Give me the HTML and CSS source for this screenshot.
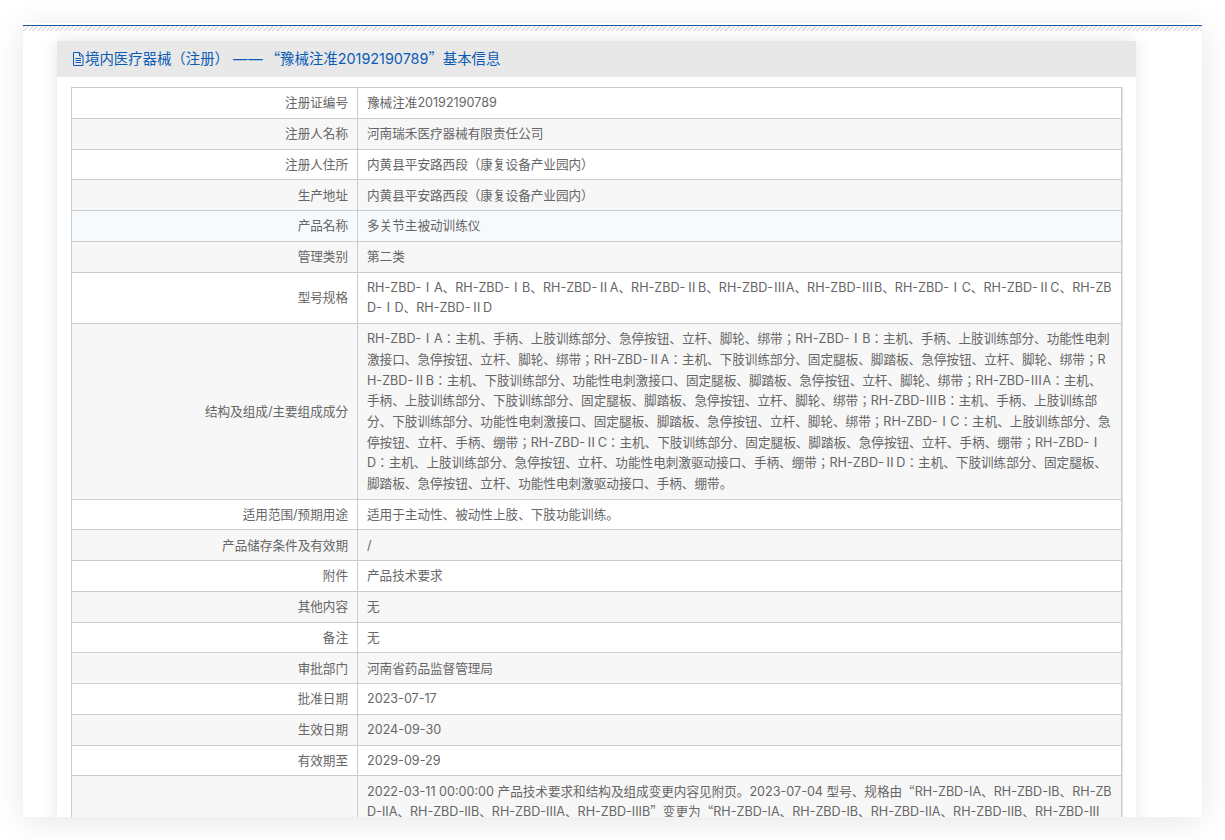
FILE: index.html
```html
<!DOCTYPE html>
<html><head>
  <meta charset="utf-8">
  <title>境内医疗器械（注册）基本信息</title>
<link rel="stylesheet" href="styles.css">
</head>
<body>
<div class="card">
 <div class="hatch"></div>
 <div class="panel">
  <div class="panelhead">
   <svg class="docicon" viewBox="0 0 12 14" width="12" height="14">
    <path d="M1.5 .5h6l3.5 3.5v9.5h-9.5z M7.5 .5v3.5h3.5 M3.5 6.5h5.5 M3.5 8.5h5.5 M3.5 10.5h5.5" fill="none" stroke="currentColor"/>
   </svg>
   <span>境内医疗器械（注册）<span class="dash">——</span><span class="quote">“</span>豫械注准20192190789<span class="quote">”</span>基本信息</span>
  </div>
  <div class="panelbody">
   <table class="info">
    <tr><th>注册证编号</th><td>豫械注准20192190789</td></tr>
    <tr><th>注册人名称</th><td>河南瑞禾医疗器械有限责任公司</td></tr>
    <tr><th>注册人住所</th><td>内黄县平安路西段（康复设备产业园内）</td></tr>
    <tr><th>生产地址</th><td>内黄县平安路西段（康复设备产业园内）</td></tr>
    <tr class="hover"><th>产品名称</th><td>多关节主被动训练仪</td></tr>
    <tr><th>管理类别</th><td>第二类</td></tr>
    <tr><th>型号规格</th><td>RH-ZBD-<span class="q">Ⅰ</span>A、RH-ZBD-<span class="q">Ⅰ</span>B、RH-ZBD-<span class="q">Ⅱ</span>A、RH-ZBD-<span class="q">Ⅱ</span>B、RH-ZBD-<span class="q">Ⅲ</span>A、RH-ZBD-<span class="q">Ⅲ</span>B、RH-ZBD-<span class="q">Ⅰ</span>C、RH-ZBD-<span class="q">Ⅱ</span>C、RH-ZBD-<span class="q">Ⅰ</span>D、RH-ZBD-<span class="q">Ⅱ</span>D</td></tr>
    <tr><th>结构及组成/主要组成成分</th><td>RH-ZBD-<span class="q">Ⅰ</span>A：主机、手柄、上肢训练部分、急停按钮、立杆、脚轮、绑带；RH-ZBD-<span class="q">Ⅰ</span>B：主机、手柄、上肢训练部分、功能性电刺激接口、急停按钮、立杆、脚轮、绑带；RH-ZBD-<span class="q">Ⅱ</span>A：主机、下肢训练部分、固定腿板、脚踏板、急停按钮、立杆、脚轮、绑带；RH-ZBD-<span class="q">Ⅱ</span>B：主机、下肢训练部分、功能性电刺激接口、固定腿板、脚踏板、急停按钮、立杆、脚轮、绑带；RH-ZBD-<span class="q">Ⅲ</span>A：主机、手柄、上肢训练部分、下肢训练部分、固定腿板、脚踏板、急停按钮、立杆、脚轮、绑带；RH-ZBD-<span class="q">Ⅲ</span>B：主机、手柄、上肢训练部分、下肢训练部分、功能性电刺激接口、固定腿板、脚踏板、急停按钮、立杆、脚轮、绑带；RH-ZBD-<span class="q">Ⅰ</span>C：主机、上肢训练部分、急停按钮、立杆、手柄、绷带；RH-ZBD-<span class="q">Ⅱ</span>C：主机、下肢训练部分、固定腿板、脚踏板、急停按钮、立杆、手柄、绷带；RH-ZBD-<span class="q">Ⅰ</span>D：主机、上肢训练部分、急停按钮、立杆、功能性电刺激驱动接口、手柄、绷带；RH-ZBD-<span class="q">Ⅱ</span>D：主机、下肢训练部分、固定腿板、脚踏板、急停按钮、立杆、功能性电刺激驱动接口、手柄、绷带。</td></tr>
    <tr><th>适用范围/预期用途</th><td>适用于主动性、被动性上肢、下肢功能训练。</td></tr>
    <tr><th>产品储存条件及有效期</th><td>/</td></tr>
    <tr><th>附件</th><td>产品技术要求</td></tr>
    <tr><th>其他内容</th><td>无</td></tr>
    <tr><th>备注</th><td>无</td></tr>
    <tr><th>审批部门</th><td>河南省药品监督管理局</td></tr>
    <tr><th>批准日期</th><td>2023-07-17</td></tr>
    <tr><th>生效日期</th><td>2024-09-30</td></tr>
    <tr><th>有效期至</th><td>2029-09-29</td></tr>
    <tr><th></th><td>2022-03-11 00:00:00 产品技术要求和结构及组成变更内容见附页。2023-07-04 型号、规格由<span class="quote">“</span>RH-ZBD-IA、RH-ZBD-IB、RH-ZBD-IIA、RH-ZBD-IIB、RH-ZBD-IIIA、RH-ZBD-IIIB<span class="quote">”</span>变更为<span class="quote">“</span>RH-ZBD-IA、RH-ZBD-IB、RH-ZBD-IIA、RH-ZBD-IIB、RH-ZBD-III</td></tr>
   </table>
  </div>
 </div>
</div>
</body></html>
```

FILE: styles.css
```css
html, body{
  margin: 0;
  height: 840px;
  overflow: hidden;
  background-color: #fff;
}
body{
  padding: 23px 23px 0;
  box-sizing: border-box;
  font-family: Inter, "Noto Sans CJK JP", sans-serif;
  font-size: 12.6px;
  line-height: 20.7px;
  color: #666;
}
.q{
  font-family: "Noto Sans CJK JP", sans-serif;
  line-height: 0;
}
.quote{
  font-family: "Noto Sans CJK SC", sans-serif;
  line-height: 0;
}
.card{
  height: 794px;
  padding-top: 2px;
  box-sizing: border-box;
  overflow: hidden;
  background-color: #fff;
  box-shadow: 0 4px 30px rgba(0,0,0,.1);
}
.hatch{
  height: 5px;
  border-top: solid 1px #1b5ba8;
  background-image: repeating-linear-gradient(135deg, #e0e0e0 0, #e0e0e0 1.5px, #fff 1.5px, #fff 3.2px);
}
.panel{
  width: 1079px;
  margin: 10px 0 0 34px;
  background-color: #fff;
  box-shadow: 0 0 16px rgba(0,0,0,.1);
}
.panelhead{
  height: 36px;
  padding-left: 15px;
  display: flex;
  align-items: center;
  gap: 1px;
  background-color: #e8e8e8;
  color: #0b5cb5;
  font-size: 14.4px;
}
.dash{
  letter-spacing: 1px;
  margin: 0 2px 0 4px;
}
.docicon{
  flex: none;
}
.panelbody{
  padding: 10px 14px 0;
}
table.info{
  width: 1051px;
  border-collapse: collapse;
  box-shadow: 1px 0 0 #e2e2e6;
}
table.info th, table.info td{
  padding: 5.25px 9px 3.8px;
  border: solid 1px #ccc;
  font-weight: normal;
  word-break: break-all;
}
table.info th{
  width: 267px;
  text-align: right;
}
table.info tr:nth-child(even){
  background-color: #f7f7f7;
}
table.info tr.hover{
  background-color: #f7fafd;
}
```
